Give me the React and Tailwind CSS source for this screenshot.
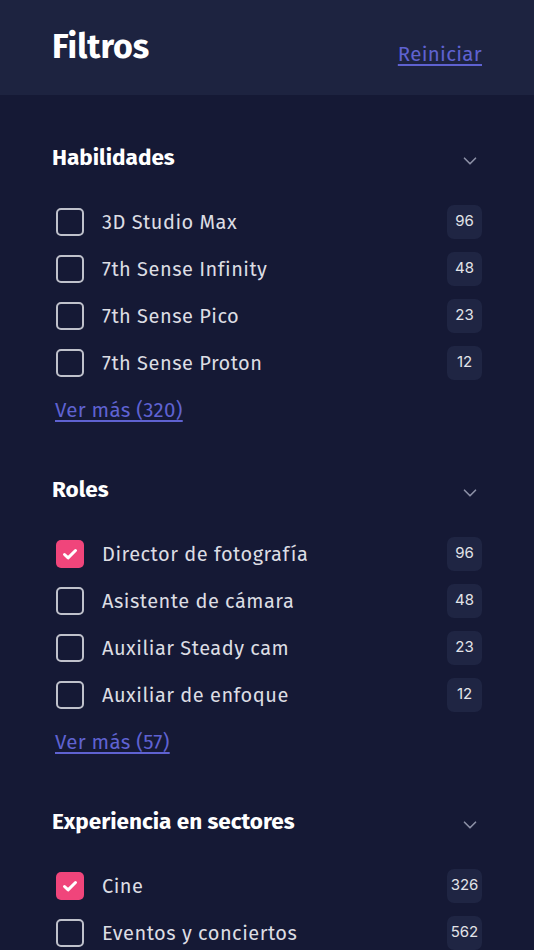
import { ChevronDown } from 'lucide-react';

const sections = [
  {
    title: 'Habilidades',
    more: 'Ver más (320)',
    items: [
      { label: '3D Studio Max', count: 96 },
      { label: '7th Sense Infinity', count: 48 },
      { label: '7th Sense Pico', count: 23 },
      { label: '7th Sense Proton', count: 12 },
    ],
  },
  {
    title: 'Roles',
    more: 'Ver más (57)',
    items: [
      { label: 'Director de fotografía', count: 96, checked: true },
      { label: 'Asistente de cámara', count: 48 },
      { label: 'Auxiliar Steady cam', count: 23 },
      { label: 'Auxiliar de enfoque', count: 12 },
    ],
  },
  {
    title: 'Experiencia en sectores',
    items: [
      { label: 'Cine', count: 326, checked: true },
      { label: 'Eventos y conciertos', count: 562 },
    ],
  },
];

const Checkbox = ({ checked }) =>
  checked ? (
    <span className="w-[28px] h-[28px] rounded-[5px] bg-[#f0457b] flex items-center justify-center shrink-0">
      <svg width="18" height="18" viewBox="0 0 18 18" fill="none">
        <path d="M3.5 9.5l3.6 3.4L14.5 5.5" stroke="white" strokeWidth="3" strokeLinecap="round" strokeLinejoin="round" />
      </svg>
    </span>
  ) : (
    <span className="w-[28px] h-[28px] rounded-[5px] border-2 border-[#bfc1cb] shrink-0" />
  );

const Section = ({ title, more, items, last }) => (
  <section className={last ? '' : 'mb-[54px]'}>
    <div className="flex items-center justify-between h-[28px]">
      <h2 className="text-[22.5px] font-bold text-white leading-[28px]">{title}</h2>
      <ChevronDown className="w-[22px] h-[22px] text-[#8c90a6] mr-[1px] mt-[5px]" strokeWidth={1.8} />
    </div>
    <ul className="mt-[26px]">
      {items.map((it) => (
        <li key={it.label} className="h-[47px] flex items-center pl-[4px]">
          <Checkbox checked={it.checked} />
          <span className="ml-[18px] flex-1 text-[20px] text-[#dcdde3] tracking-[0.5px]">{it.label}</span>
          <span
            className="w-[35px] h-[34px] rounded-[7px] bg-[#1f2543] flex items-center justify-center text-[15px] text-[#e2e3e8]"
            style={{ fontFamily: 'Inter, sans-serif' }}
          >
            {it.count}
          </span>
        </li>
      ))}
    </ul>
    {more && (
      <a href="#" className="block mt-[12px] h-[24px] leading-[24px] ml-[3px] text-[20.5px] tracking-[0.3px] text-[#5f62d1] underline underline-offset-[3px]">
        {more}
      </a>
    )}
  </section>
);

export default function App() {
  return (
    <div
      className="w-[534px] min-h-[950px] bg-[#151935] overflow-hidden"
      style={{ fontFamily: '"Fira Sans", "Noto Sans", "Open Sans", sans-serif' }}
    >
      <header className="h-[95px] bg-[#1d2340] px-[52px] flex items-center justify-between">
        <h1 className="text-[34px] font-bold text-white leading-none -mt-[1px]">Filtros</h1>
        <a href="#" className="text-[20.5px] tracking-[0.3px] text-[#5f62d1] underline underline-offset-[3px] mt-[13px]">
          Reiniciar
        </a>
      </header>
      <main className="px-[52px] pt-[49px]">
        {sections.map((s, i) => (
          <Section key={s.title} {...s} last={i === sections.length - 1} />
        ))}
      </main>
    </div>
  );
}
